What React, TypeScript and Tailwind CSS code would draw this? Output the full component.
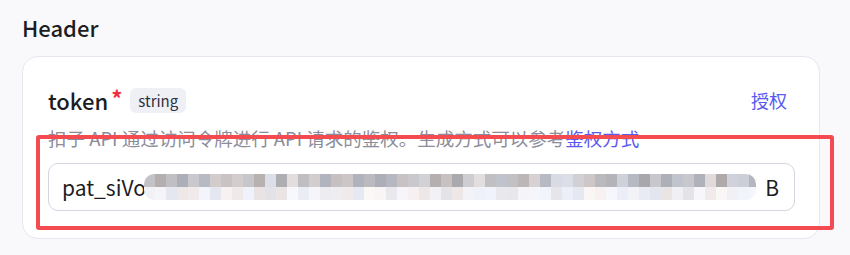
import React from "react";

function mosaic(seed: number, n: number, light: boolean) {
  const out: string[] = [];
  let s = seed;
  for (let i = 0; i < n; i++) {
    s = (s * 9301 + 49297) % 233280;
    const r = s / 233280;
    const base = light ? 226 + Math.floor(r * 22) : 168 + Math.floor(r * 56);
    s = (s * 9301 + 49297) % 233280;
    const t = (s / 233280) * 3;
    const tint = Math.floor(t);
    const rr = base + (tint === 0 ? 6 : 0);
    const gg = base + (tint === 2 ? 2 : 0);
    const bb = base + (tint === 2 ? 12 : tint === 1 ? 4 : 0);
    out.push(`rgb(${Math.min(rr, 250)},${Math.min(gg, 250)},${Math.min(bb, 252)})`);
  }
  return out;
}

const TOP = mosaic(7, 56, false);
const BOT = mosaic(13, 56, true);

export default function App() {
  return (
    <div
      className="relative w-[850px] h-[255px] bg-[#f9f9fc] pl-[22px] pr-[30px] pt-[11px]"
      style={{ fontFamily: '"Noto Sans CJK SC", "Noto Sans", sans-serif' }}
    >
      <div className="text-[22px] leading-[32px] text-[#1c1d23] font-medium">Header</div>
      <div className="mt-[13px] w-[798px] rounded-[16px] border border-[#e6e7ef] bg-white pl-[25px] pr-[25px] pt-[28px] pb-[27px]">
        <div className="flex items-center justify-between h-[30px]">
          <div className="flex items-center">
            <span className="text-[22px] font-medium text-[#1c1d23] leading-[30px]">token</span>
            <span className="text-[#f0303f] text-[22px] leading-[22px] ml-[3px] self-start mt-[1px] font-bold">*</span>
            <span className="ml-[8px] h-[25px] px-[8px] rounded-[6px] bg-[#eff0f5] text-[15px] leading-[25px] text-[#2e3140]">
              string
            </span>
          </div>
          <span className="text-[#5a5af2] text-[18px] leading-[30px] mr-[7px]">授权</span>
        </div>
        <div className="mt-[9px] text-[18.5px] leading-[28px] text-[#8c8d99] whitespace-nowrap">
          扣子 API 通过访问令牌进行 API 请求的鉴权。生成方式可以参考
          <span className="text-[#5a5af2]">鉴权方式</span>
        </div>
        <div className="mt-[11px] h-[48px] w-[747px] rounded-[10px] border border-[#d3d5e0] flex items-center pl-[13px] pr-[15px] overflow-hidden">
          <span className="text-[21px] text-[#1c1d23] leading-[28px] whitespace-nowrap">pat_siVo</span>
          <div className="flex flex-col w-[612px] h-[26px] ml-[-2px] rounded-[10px] overflow-hidden shrink-0">
            <div className="flex h-[13px]">
              {TOP.map((c, i) => (
                <div key={i} className="w-[11px] h-[13px] shrink-0" style={{ backgroundColor: c }} />
              ))}
            </div>
            <div className="flex h-[13px]">
              {BOT.map((c, i) => (
                <div key={i} className="w-[11px] h-[13px] shrink-0" style={{ backgroundColor: c }} />
              ))}
            </div>
          </div>
          <span className="text-[21px] text-[#1c1d23] leading-[28px] ml-auto">B</span>
        </div>
      </div>
      <div className="absolute left-[36px] top-[135px] w-[798px] h-[95px] border-[4px] border-[#f44b50] rounded-[3px] pointer-events-none" />
    </div>
  );
}
